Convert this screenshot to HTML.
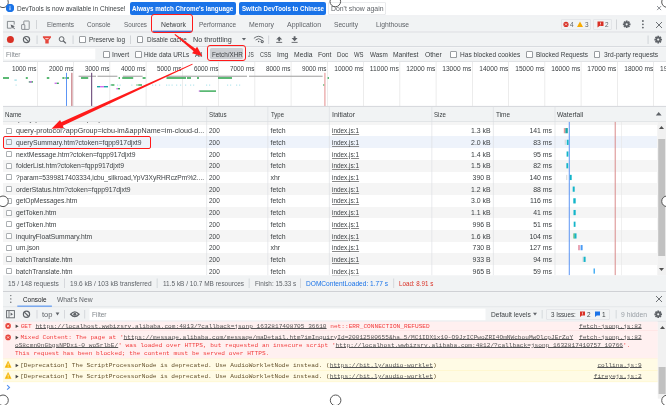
<!DOCTYPE html>
<html><head><meta charset="utf-8"><style>
html,body{margin:0;padding:0;}
body{will-change:transform;width:666px;height:405px;overflow:hidden;position:relative;background:#fff;font-family:"Liberation Sans",sans-serif;}
</style></head><body>
<svg style="position:absolute;left:0;top:0" width="666" height="405"><rect x="0" y="0" width="666" height="16" fill="#ffffff"/></svg>
<svg style="position:absolute;left:0;top:0" width="666" height="405"><rect x="3" y="15.5" width="663" height="1" fill="#e4e6e9"/></svg>
<svg style="position:absolute;left:0;top:0" width="20" height="16"><circle cx="10" cy="8.1" r="4.0" fill="#1a73e8"/><rect x="9.55" y="7.3" width="0.9" height="2.8" fill="#fff"/><rect x="9.55" y="5.8" width="0.9" height="0.9" fill="#fff"/></svg>
<div style="position:absolute;left:17.40px;top:3.60px;font-family:'Liberation Sans', sans-serif;font-size:6.9px;line-height:10px;color:#3c4043;font-weight:normal;white-space:nowrap;transform:scaleX(0.9419);transform-origin:left center;">DevTools is now available in Chinese!</div>
<div style="position:absolute;left:129.7px;top:2.2px;width:106.3px;height:12.6px;background:#1a73e8;border-radius:2px"></div>
<div style="position:absolute;left:132.20px;top:3.60px;font-family:'Liberation Sans', sans-serif;font-size:6.9px;line-height:10px;color:#ffffff;font-weight:bold;white-space:nowrap;transform:scaleX(0.9081);transform-origin:left center;">Always match Chrome&#x27;s language</div>
<div style="position:absolute;left:239px;top:2.2px;width:87px;height:12.6px;background:#1a73e8;border-radius:2px"></div>
<div style="position:absolute;left:241.60px;top:3.60px;font-family:'Liberation Sans', sans-serif;font-size:6.9px;line-height:10px;color:#ffffff;font-weight:bold;white-space:nowrap;transform:scaleX(0.8936);transform-origin:left center;">Switch DevTools to Chinese</div>
<div style="position:absolute;left:328px;top:2.2px;width:58px;height:12.6px;background:#ffffff;border-radius:2px;box-shadow:inset 0 0 0 0.6px #dadce0"></div>
<div style="position:absolute;left:330.80px;top:3.60px;font-family:'Liberation Sans', sans-serif;font-size:6.9px;line-height:10px;color:#5f6368;font-weight:normal;white-space:nowrap;transform:scaleX(0.9970);transform-origin:left center;">Don&#x27;t show again</div>
<svg style="position:absolute;left:655px;top:4px" width="8" height="8"><path d="M2.1 2.1 L6.1 6.1 M6.1 2.1 L2.1 6.1" stroke="#7a7f84" stroke-width="0.9"/></svg>
<svg style="position:absolute;left:0;top:0" width="666" height="405"><rect x="3" y="16.2" width="663" height="15.8" fill="#f1f3f4"/></svg>
<svg style="position:absolute;left:0;top:0" width="666" height="405"><rect x="3" y="31.7" width="663" height="1" fill="#cfd2d6"/></svg>
<svg style="position:absolute;left:5px;top:19px" width="12" height="12"><path d="M6 9.2 H2.4 V2.4 H9.2 V5.6" fill="none" stroke="#6f7479" stroke-width="0.8"/><path d="M5.6 5.6 L9.9 7.2 L8.2 7.9 L10 9.7 L9.4 10.3 L7.6 8.5 L6.9 10.1 Z" fill="#5f6368"/></svg>
<svg style="position:absolute;left:19px;top:18.5px" width="14" height="13"><rect x="4.8" y="2" width="5.4" height="8.4" rx="0.5" fill="none" stroke="#767b80" stroke-width="0.8"/><rect x="2.6" y="5.6" width="3.2" height="4.8" rx="0.4" fill="#f1f3f4" stroke="#767b80" stroke-width="0.8"/></svg>
<svg style="position:absolute;left:0;top:0" width="666" height="405"><rect x="36.3" y="20" width="0.7" height="9" fill="#c4c7cc"/></svg>
<div style="position:absolute;left:46.50px;top:20.10px;font-family:'Liberation Sans', sans-serif;font-size:6.9px;line-height:10px;color:#5f6368;font-weight:normal;white-space:nowrap;transform:scaleX(0.9396);transform-origin:left center;">Elements</div>
<div style="position:absolute;left:87.00px;top:20.10px;font-family:'Liberation Sans', sans-serif;font-size:6.9px;line-height:10px;color:#5f6368;font-weight:normal;white-space:nowrap;transform:scaleX(0.9290);transform-origin:left center;">Console</div>
<div style="position:absolute;left:124.00px;top:20.10px;font-family:'Liberation Sans', sans-serif;font-size:6.9px;line-height:10px;color:#5f6368;font-weight:normal;white-space:nowrap;transform:scaleX(0.9098);transform-origin:left center;">Sources</div>
<div style="position:absolute;left:160.60px;top:20.10px;font-family:'Liberation Sans', sans-serif;font-size:6.9px;line-height:10px;color:#3c4043;font-weight:normal;white-space:nowrap;transform:scaleX(0.9889);transform-origin:left center;">Network</div>
<div style="position:absolute;left:198.80px;top:20.10px;font-family:'Liberation Sans', sans-serif;font-size:6.9px;line-height:10px;color:#5f6368;font-weight:normal;white-space:nowrap;transform:scaleX(0.9429);transform-origin:left center;">Performance</div>
<div style="position:absolute;left:249.00px;top:20.10px;font-family:'Liberation Sans', sans-serif;font-size:6.9px;line-height:10px;color:#5f6368;font-weight:normal;white-space:nowrap;transform:scaleX(1.0044);transform-origin:left center;">Memory</div>
<div style="position:absolute;left:287.00px;top:20.10px;font-family:'Liberation Sans', sans-serif;font-size:6.9px;line-height:10px;color:#5f6368;font-weight:normal;white-space:nowrap;transform:scaleX(1.0083);transform-origin:left center;">Application</div>
<div style="position:absolute;left:334.00px;top:20.10px;font-family:'Liberation Sans', sans-serif;font-size:6.9px;line-height:10px;color:#5f6368;font-weight:normal;white-space:nowrap;transform:scaleX(0.9636);transform-origin:left center;">Security</div>
<div style="position:absolute;left:376.00px;top:20.10px;font-family:'Liberation Sans', sans-serif;font-size:6.9px;line-height:10px;color:#5f6368;font-weight:normal;white-space:nowrap;transform:scaleX(0.9787);transform-origin:left center;">Lighthouse</div>
<svg style="position:absolute;left:0;top:0" width="666" height="405"><rect x="153" y="30.7" width="39" height="1.2" fill="#3d5fc8"/></svg>
<div style="position:absolute;left:560.5px;top:19px;width:30.5px;height:10.7px;background:#f1f3f4;border-radius:2px;box-shadow:inset 0 0 0 0.6px #dadce0"></div>
<svg style="position:absolute;left:562px;top:20px" width="30" height="9"><circle cx="4" cy="4.4" r="2.6" fill="#d93025"/><path d="M3 3.4 L5 5.4 M5 3.4 L3 5.4" stroke="#fff" stroke-width="0.7"/><path d="M18 1.6 L21 7 L15 7 Z" fill="#f9ab00"/></svg>
<div style="position:absolute;left:570.20px;top:20.30px;font-family:'Liberation Sans', sans-serif;font-size:6.9px;line-height:10px;color:#5f6368;font-weight:normal;white-space:nowrap;transform:scaleX(0.9366);transform-origin:left center;">4</div>
<div style="position:absolute;left:584.50px;top:20.30px;font-family:'Liberation Sans', sans-serif;font-size:6.9px;line-height:10px;color:#5f6368;font-weight:normal;white-space:nowrap;transform:scaleX(0.9366);transform-origin:left center;">3</div>
<div style="position:absolute;left:593px;top:19px;width:19.4px;height:10.7px;background:#f1f3f4;border-radius:2px;box-shadow:inset 0 0 0 0.6px #dadce0"></div>
<svg style="position:absolute;left:596px;top:20px" width="10" height="9"><path d="M1.5 1.6 H7.5 V6 H3.5 L1.5 7.6 Z" fill="#d93025"/><rect x="4.2" y="2.5" width="0.7" height="1.8" fill="#fff"/><rect x="4.2" y="4.7" width="0.7" height="0.6" fill="#fff"/></svg>
<div style="position:absolute;left:604.50px;top:20.30px;font-family:'Liberation Sans', sans-serif;font-size:6.9px;line-height:10px;color:#5f6368;font-weight:normal;white-space:nowrap;transform:scaleX(0.9366);transform-origin:left center;">2</div>
<svg style="position:absolute;left:0;top:0" width="666" height="405"><rect x="616.2" y="19.5" width="0.7" height="10" fill="#c4c7cc"/></svg>
<svg style="position:absolute;left:0;top:0" width="666" height="405"><path d="M629.27 23.33 L630.51 23.46 L630.51 25.14 L629.27 25.27 L629.20 25.43 L629.98 26.40 L628.80 27.58 L627.83 26.80 L627.67 26.87 L627.54 28.11 L625.86 28.11 L625.73 26.87 L625.57 26.80 L624.60 27.58 L623.42 26.40 L624.20 25.43 L624.13 25.27 L622.89 25.14 L622.89 23.46 L624.13 23.33 L624.20 23.17 L623.42 22.20 L624.60 21.02 L625.57 21.80 L625.73 21.73 L625.86 20.49 L627.54 20.49 L627.67 21.73 L627.83 21.80 L628.80 21.02 L629.98 22.20 L629.20 23.17 Z" fill="#5f6368"/><circle cx="626.7" cy="24.3" r="1.1" fill="#f1f3f4"/></svg>
<svg style="position:absolute;left:640px;top:19px" width="6" height="11"><circle cx="2.9" cy="2" r="0.9" fill="#5f6368"/><circle cx="2.9" cy="5.3" r="0.9" fill="#5f6368"/><circle cx="2.9" cy="8.6" r="0.9" fill="#5f6368"/></svg>
<svg style="position:absolute;left:654px;top:19.5px" width="10" height="10"><path d="M2 2 L8 8 M8 2 L2 8" stroke="#5f6368" stroke-width="0.9"/></svg>
<svg style="position:absolute;left:0;top:0" width="666" height="405"><rect x="3" y="32.5" width="663" height="14.5" fill="#f1f3f4"/></svg>
<svg style="position:absolute;left:0;top:0" width="666" height="405"><rect x="3" y="46.0" width="663" height="1" fill="#d8dbdf"/></svg>
<svg style="position:absolute;left:0;top:0" width="666" height="50"><circle cx="10.4" cy="39.6" r="3.5" fill="#d93025"/><circle cx="26.5" cy="39.6" r="3.1" fill="none" stroke="#5f6368" stroke-width="1.2"/><path d="M24.3 37.4 L28.7 41.8" stroke="#5f6368" stroke-width="1.2"/><path d="M42.9 36.3 H51 V37.6 L48.7 40.3 V43.6 H45.3 V40.3 L42.9 37.6 Z" fill="#e5473d"/><path d="M44.9 38.0 H49 L48 39.3 H45.9 Z" fill="#f7c4c0"/><circle cx="61.6" cy="39.1" r="2.4" fill="none" stroke="#5f6368" stroke-width="1.0"/><path d="M63.2 40.7 L65.9 43.4" stroke="#5f6368" stroke-width="1.3"/></svg>
<svg style="position:absolute;left:0;top:0" width="666" height="405"><rect x="36.7" y="35.5" width="0.7" height="8.5" fill="#c4c7cc"/></svg>
<svg style="position:absolute;left:0;top:0" width="666" height="405"><rect x="72.7" y="35.5" width="0.7" height="8.5" fill="#c4c7cc"/></svg>
<div style="position:absolute;left:78.9px;top:36.3px;width:6.8px;height:6.8px;background:#fff;border-radius:1.5px;box-shadow:inset 0 0 0 0.8px #7d8287;box-sizing:border-box"></div>
<div style="position:absolute;left:89.00px;top:35.00px;font-family:'Liberation Sans', sans-serif;font-size:6.9px;line-height:10px;color:#3c4043;font-weight:normal;white-space:nowrap;transform:scaleX(0.9305);transform-origin:left center;">Preserve log</div>
<svg style="position:absolute;left:0;top:0" width="666" height="405"><rect x="130.3" y="35.5" width="0.7" height="8.5" fill="#c4c7cc"/></svg>
<div style="position:absolute;left:136.6px;top:36.3px;width:6.8px;height:6.8px;background:#fff;border-radius:1.5px;box-shadow:inset 0 0 0 0.8px #7d8287;box-sizing:border-box"></div>
<div style="position:absolute;left:146.80px;top:35.00px;font-family:'Liberation Sans', sans-serif;font-size:6.9px;line-height:10px;color:#3c4043;font-weight:normal;white-space:nowrap;transform:scaleX(0.9192);transform-origin:left center;">Disable cache</div>
<div style="position:absolute;left:193.00px;top:35.00px;font-family:'Liberation Sans', sans-serif;font-size:6.9px;line-height:10px;color:#3c4043;font-weight:normal;white-space:nowrap;transform:scaleX(1.0442);transform-origin:left center;">No throttling</div>
<svg style="position:absolute;left:241px;top:37px" width="6" height="5"><path d="M0.9 0.9 H5 L2.95 3.4 Z" fill="#5f6368"/></svg>
<svg style="position:absolute;left:0;top:0" width="666" height="50"><path d="M253.9 38.3 Q258.6 34.3 263.3 38.3" fill="none" stroke="#5f6368" stroke-width="0.9"/><path d="M255.6 40 Q258.6 37.4 261.6 40" fill="none" stroke="#5f6368" stroke-width="0.9"/><circle cx="258.6" cy="41.6" r="0.75" fill="#5f6368"/><circle cx="262.2" cy="41.6" r="1.6" fill="#5f6368"/><circle cx="262.2" cy="41.6" r="0.55" fill="#f1f3f4"/><path d="M279.2 36.4 L282.2 39.6 H280.1 V41.3 H278.3 V39.6 H276.2 Z" fill="#5f6368"/><rect x="276.2" y="41.9" width="6" height="0.9" fill="#5f6368"/><path d="M294.6 41.2 L291.6 38 H293.7 V36.3 H295.5 V38 H297.6 Z" fill="#5f6368"/><rect x="291.6" y="41.9" width="6" height="0.9" fill="#5f6368"/></svg>
<svg style="position:absolute;left:0;top:0" width="666" height="405"><rect x="268.4" y="35.5" width="0.7" height="8.5" fill="#c4c7cc"/></svg>
<svg style="position:absolute;left:0;top:0" width="666" height="405"><rect x="647.7" y="35.5" width="0.7" height="8.5" fill="#c4c7cc"/></svg>
<svg style="position:absolute;left:0;top:0" width="666" height="405"><path d="M660.77 38.63 L662.01 38.76 L662.01 40.44 L660.77 40.57 L660.70 40.73 L661.48 41.70 L660.30 42.88 L659.33 42.10 L659.17 42.17 L659.04 43.41 L657.36 43.41 L657.23 42.17 L657.07 42.10 L656.10 42.88 L654.92 41.70 L655.70 40.73 L655.63 40.57 L654.39 40.44 L654.39 38.76 L655.63 38.63 L655.70 38.47 L654.92 37.50 L656.10 36.32 L657.07 37.10 L657.23 37.03 L657.36 35.79 L659.04 35.79 L659.17 37.03 L659.33 37.10 L660.30 36.32 L661.48 37.50 L660.70 38.47 Z" fill="#5f6368"/><circle cx="658.2" cy="39.6" r="1.1" fill="#f1f3f4"/></svg>
<svg style="position:absolute;left:0;top:0" width="666" height="405"><rect x="3" y="47.3" width="663" height="14.4" fill="#f1f3f4"/></svg>
<svg style="position:absolute;left:0;top:0" width="666" height="405"><rect x="3" y="61.1" width="663" height="1" fill="#dfe1e5"/></svg>
<svg style="position:absolute;left:0;top:0" width="666" height="405"><rect x="3.8" y="48.6" width="91.5" height="10.9" fill="#ffffff"/></svg>
<div style="position:absolute;left:6.00px;top:50.30px;font-family:'Liberation Sans', sans-serif;font-size:6.9px;line-height:10px;color:#80868b;font-weight:normal;white-space:nowrap;transform:scaleX(0.9469);transform-origin:left center;">Filter</div>
<div style="position:absolute;left:102.8px;top:51.1px;width:6.8px;height:6.8px;background:#fff;border-radius:1.5px;box-shadow:inset 0 0 0 0.8px #7d8287;box-sizing:border-box"></div>
<div style="position:absolute;left:112.40px;top:49.90px;font-family:'Liberation Sans', sans-serif;font-size:6.9px;line-height:10px;color:#3c4043;font-weight:normal;white-space:nowrap;transform:scaleX(0.9922);transform-origin:left center;">Invert</div>
<div style="position:absolute;left:135.3px;top:51.1px;width:6.8px;height:6.8px;background:#fff;border-radius:1.5px;box-shadow:inset 0 0 0 0.8px #7d8287;box-sizing:border-box"></div>
<div style="position:absolute;left:144.30px;top:49.90px;font-family:'Liberation Sans', sans-serif;font-size:6.9px;line-height:10px;color:#3c4043;font-weight:normal;white-space:nowrap;transform:scaleX(0.9290);transform-origin:left center;">Hide data URLs</div>
<div style="position:absolute;left:195.40px;top:49.90px;font-family:'Liberation Sans', sans-serif;font-size:6.9px;line-height:10px;color:#3c4043;font-weight:normal;white-space:nowrap;transform:scaleX(0.9385);transform-origin:left center;">All</div>
<div style="position:absolute;left:209.8px;top:47.9px;width:33.4px;height:11.3px;background:#cdd0d4;border-radius:1.5px"></div>
<div style="position:absolute;left:211.60px;top:49.90px;font-family:'Liberation Sans', sans-serif;font-size:6.9px;line-height:10px;color:#3c4043;font-weight:normal;white-space:nowrap;transform:scaleX(0.9109);transform-origin:left center;">Fetch/XHR</div>
<div style="position:absolute;left:248.30px;top:49.90px;font-family:'Liberation Sans', sans-serif;font-size:6.9px;line-height:10px;color:#3c4043;font-weight:normal;white-space:nowrap;transform:scaleX(0.7083);transform-origin:left center;">JS</div>
<div style="position:absolute;left:259.80px;top:49.90px;font-family:'Liberation Sans', sans-serif;font-size:6.9px;line-height:10px;color:#3c4043;font-weight:normal;white-space:nowrap;transform:scaleX(0.7903);transform-origin:left center;">CSS</div>
<div style="position:absolute;left:276.70px;top:49.90px;font-family:'Liberation Sans', sans-serif;font-size:6.9px;line-height:10px;color:#3c4043;font-weight:normal;white-space:nowrap;transform:scaleX(0.9826);transform-origin:left center;">Img</div>
<div style="position:absolute;left:293.70px;top:49.90px;font-family:'Liberation Sans', sans-serif;font-size:6.9px;line-height:10px;color:#3c4043;font-weight:normal;white-space:nowrap;transform:scaleX(0.9850);transform-origin:left center;">Media</div>
<div style="position:absolute;left:317.70px;top:49.90px;font-family:'Liberation Sans', sans-serif;font-size:6.9px;line-height:10px;color:#3c4043;font-weight:normal;white-space:nowrap;transform:scaleX(0.9785);transform-origin:left center;">Font</div>
<div style="position:absolute;left:337.00px;top:49.90px;font-family:'Liberation Sans', sans-serif;font-size:6.9px;line-height:10px;color:#3c4043;font-weight:normal;white-space:nowrap;transform:scaleX(0.8968);transform-origin:left center;">Doc</div>
<div style="position:absolute;left:354.30px;top:49.90px;font-family:'Liberation Sans', sans-serif;font-size:6.9px;line-height:10px;color:#3c4043;font-weight:normal;white-space:nowrap;transform:scaleX(0.8641);transform-origin:left center;">WS</div>
<div style="position:absolute;left:369.70px;top:49.90px;font-family:'Liberation Sans', sans-serif;font-size:6.9px;line-height:10px;color:#3c4043;font-weight:normal;white-space:nowrap;transform:scaleX(0.9239);transform-origin:left center;">Wasm</div>
<div style="position:absolute;left:393.30px;top:49.90px;font-family:'Liberation Sans', sans-serif;font-size:6.9px;line-height:10px;color:#3c4043;font-weight:normal;white-space:nowrap;transform:scaleX(0.9790);transform-origin:left center;">Manifest</div>
<div style="position:absolute;left:424.60px;top:49.90px;font-family:'Liberation Sans', sans-serif;font-size:6.9px;line-height:10px;color:#3c4043;font-weight:normal;white-space:nowrap;transform:scaleX(0.9748);transform-origin:left center;">Other</div>
<div style="position:absolute;left:450.1px;top:51.1px;width:6.8px;height:6.8px;background:#fff;border-radius:1.5px;box-shadow:inset 0 0 0 0.8px #7d8287;box-sizing:border-box"></div>
<div style="position:absolute;left:460.00px;top:49.90px;font-family:'Liberation Sans', sans-serif;font-size:6.9px;line-height:10px;color:#3c4043;font-weight:normal;white-space:nowrap;transform:scaleX(0.9525);transform-origin:left center;">Has blocked cookies</div>
<div style="position:absolute;left:526.1px;top:51.1px;width:6.8px;height:6.8px;background:#fff;border-radius:1.5px;box-shadow:inset 0 0 0 0.8px #7d8287;box-sizing:border-box"></div>
<div style="position:absolute;left:536.00px;top:49.90px;font-family:'Liberation Sans', sans-serif;font-size:6.9px;line-height:10px;color:#3c4043;font-weight:normal;white-space:nowrap;transform:scaleX(0.9361);transform-origin:left center;">Blocked Requests</div>
<div style="position:absolute;left:593.6px;top:51.1px;width:6.8px;height:6.8px;background:#fff;border-radius:1.5px;box-shadow:inset 0 0 0 0.8px #7d8287;box-sizing:border-box"></div>
<div style="position:absolute;left:603.80px;top:49.90px;font-family:'Liberation Sans', sans-serif;font-size:6.9px;line-height:10px;color:#3c4043;font-weight:normal;white-space:nowrap;transform:scaleX(0.9692);transform-origin:left center;">3rd-party requests</div>
<svg style="position:absolute;left:0;top:0" width="666" height="405"><rect x="3" y="62" width="663" height="44.5" fill="#ffffff"/></svg>
<svg style="position:absolute;left:0;top:0" width="666" height="405"><rect x="37.00" y="62" width="0.7" height="44.5" fill="#e4e4e4"/><rect x="73.25" y="62" width="0.7" height="44.5" fill="#e4e4e4"/><rect x="109.50" y="62" width="0.7" height="44.5" fill="#e4e4e4"/><rect x="145.75" y="62" width="0.7" height="44.5" fill="#e4e4e4"/><rect x="182.00" y="62" width="0.7" height="44.5" fill="#e4e4e4"/><rect x="218.25" y="62" width="0.7" height="44.5" fill="#e4e4e4"/><rect x="254.50" y="62" width="0.7" height="44.5" fill="#e4e4e4"/><rect x="290.75" y="62" width="0.7" height="44.5" fill="#e4e4e4"/><rect x="327.00" y="62" width="0.7" height="44.5" fill="#e4e4e4"/><rect x="363.25" y="62" width="0.7" height="44.5" fill="#e4e4e4"/><rect x="399.50" y="62" width="0.7" height="44.5" fill="#e4e4e4"/><rect x="435.75" y="62" width="0.7" height="44.5" fill="#e4e4e4"/><rect x="472.00" y="62" width="0.7" height="44.5" fill="#e4e4e4"/><rect x="508.25" y="62" width="0.7" height="44.5" fill="#e4e4e4"/><rect x="544.50" y="62" width="0.7" height="44.5" fill="#e4e4e4"/><rect x="580.75" y="62" width="0.7" height="44.5" fill="#e4e4e4"/><rect x="617.00" y="62" width="0.7" height="44.5" fill="#e4e4e4"/><rect x="653.25" y="62" width="0.7" height="44.5" fill="#e4e4e4"/><rect x="78.6" y="75.7" width="17.40" height="1.1" fill="#a6a6a6"/><rect x="97.5" y="75.7" width="19.90" height="1.1" fill="#a6a6a6"/><rect x="122.8" y="75.7" width="19.80" height="1.1" fill="#a6a6a6"/><rect x="166.5" y="75.7" width="80.50" height="1.1" fill="#a6a6a6"/><rect x="249" y="75.7" width="73.60" height="1.1" fill="#a6a6a6"/><rect x="3" y="77.2" width="6.00" height="1.6" fill="#34a853"/><rect x="25.8" y="77.2" width="2.00" height="1.6" fill="#34a853"/><rect x="46.8" y="77.2" width="2.50" height="1.6" fill="#34a853"/><rect x="62.4" y="77.2" width="2.10" height="1.6" fill="#34a853"/><rect x="65.4" y="77.2" width="3.60" height="1.6" fill="#34a853"/><rect x="81" y="77.2" width="7.20" height="1.6" fill="#34a853"/><rect x="118.6" y="77.2" width="1.40" height="1.6" fill="#34a853"/><rect x="122.2" y="77.2" width="11.00" height="1.6" fill="#34a853"/><rect x="142.6" y="77.2" width="3.00" height="1.6" fill="#34a853"/><rect x="166.5" y="77.2" width="19.50" height="1.6" fill="#34a853"/><rect x="187" y="77.2" width="4.00" height="1.6" fill="#34a853"/><rect x="197" y="77.2" width="2.00" height="1.6" fill="#34a853"/><rect x="218" y="77.2" width="14.00" height="1.6" fill="#34a853"/><rect x="327.6" y="77.2" width="1.40" height="1.6" fill="#34a853"/><rect x="14.4" y="79.4" width="2.40" height="1.4" fill="#a8e2ea"/><rect x="110.8" y="84.3" width="3.60" height="1.4" fill="#34a853"/><rect x="136.5" y="84.3" width="1.00" height="1.4" fill="#34a853"/><rect x="138.2" y="84.3" width="3.80" height="1.4" fill="#34a853"/><rect x="199.5" y="90.4" width="16.50" height="1.4" fill="#34a853"/><rect x="323.2" y="84.3" width="1.20" height="1.4" fill="#34a853"/><rect x="28.8" y="81.2" width="4.20" height="1.4" fill="#34a853"/><rect x="29.5" y="81.2" width="2.30" height="1.4" fill="#d36ff0"/><rect x="54.6" y="82.6" width="2.20" height="1.4" fill="#d36ff0"/><rect x="56.8" y="82.6" width="2.00" height="1.4" fill="#34a853"/><rect x="97" y="86" width="3.00" height="1.4" fill="#1aa5a5"/><rect x="100" y="86" width="4.00" height="1.4" fill="#d36ff0"/><rect x="104" y="86" width="4.00" height="1.4" fill="#1aa5a5"/><rect x="116.4" y="88" width="1.60" height="1.4" fill="#d36ff0"/><rect x="118" y="88" width="2.00" height="1.4" fill="#34a853"/><rect x="15.5" y="84.6" width="1.20" height="1" fill="#a8e2ea"/><rect x="110.5" y="84.6" width="1.20" height="1" fill="#a8e2ea"/><rect x="117" y="84.6" width="1.20" height="1" fill="#a8e2ea"/><rect x="119.6" y="84.6" width="1.20" height="1" fill="#a8e2ea"/><rect x="131.2" y="84.6" width="1.20" height="1" fill="#a8e2ea"/><rect x="152" y="84.6" width="1.20" height="1" fill="#a8e2ea"/><rect x="155" y="84.6" width="1.20" height="1" fill="#a8e2ea"/><rect x="159" y="84.6" width="1.20" height="1" fill="#a8e2ea"/><rect x="166" y="84.6" width="1.20" height="1" fill="#a8e2ea"/><rect x="168.5" y="84.6" width="1.20" height="1" fill="#a8e2ea"/><rect x="171.5" y="84.6" width="1.20" height="1" fill="#a8e2ea"/><rect x="176" y="84.6" width="1.20" height="1" fill="#a8e2ea"/><rect x="180" y="84.6" width="1.20" height="1" fill="#a8e2ea"/><rect x="185" y="84.6" width="1.20" height="1" fill="#a8e2ea"/><rect x="190" y="84.6" width="1.20" height="1" fill="#a8e2ea"/><rect x="193" y="84.6" width="1.20" height="1" fill="#a8e2ea"/><rect x="206" y="84.6" width="1.20" height="1" fill="#a8e2ea"/><rect x="209" y="84.6" width="1.20" height="1" fill="#a8e2ea"/><rect x="227" y="84.6" width="1.20" height="1" fill="#a8e2ea"/><rect x="230" y="84.6" width="1.20" height="1" fill="#a8e2ea"/><rect x="236" y="84.6" width="1.20" height="1" fill="#a8e2ea"/><rect x="239" y="84.6" width="1.20" height="1" fill="#a8e2ea"/><rect x="198.8" y="90.4" width="1.00" height="1.4" fill="#d36ff0"/><rect x="66.1" y="72.8" width="0.9" height="33.7" fill="#4a8af4"/><rect x="71.2" y="72.8" width="1.3" height="33.7" fill="#c77f86"/><rect x="91.1" y="72.8" width="1.1" height="33.7" fill="#6b4a7a"/><rect x="324.3" y="72.8" width="1.2" height="33.7" fill="#e8a0a0"/></svg>
<div style="position:absolute;right:629.30px;top:64.00px;font-family:'Liberation Sans', sans-serif;font-size:6.9px;line-height:10px;color:#3c4043;font-weight:normal;white-space:nowrap;transform:scaleX(0.9267);transform-origin:right center;">1000 ms</div>
<div style="position:absolute;right:593.05px;top:64.00px;font-family:'Liberation Sans', sans-serif;font-size:6.9px;line-height:10px;color:#3c4043;font-weight:normal;white-space:nowrap;transform:scaleX(0.9267);transform-origin:right center;">2000 ms</div>
<div style="position:absolute;right:556.80px;top:64.00px;font-family:'Liberation Sans', sans-serif;font-size:6.9px;line-height:10px;color:#3c4043;font-weight:normal;white-space:nowrap;transform:scaleX(0.9267);transform-origin:right center;">3000 ms</div>
<div style="position:absolute;right:520.55px;top:64.00px;font-family:'Liberation Sans', sans-serif;font-size:6.9px;line-height:10px;color:#3c4043;font-weight:normal;white-space:nowrap;transform:scaleX(0.9267);transform-origin:right center;">4000 ms</div>
<div style="position:absolute;right:484.30px;top:64.00px;font-family:'Liberation Sans', sans-serif;font-size:6.9px;line-height:10px;color:#3c4043;font-weight:normal;white-space:nowrap;transform:scaleX(0.9267);transform-origin:right center;">5000 ms</div>
<div style="position:absolute;right:448.05px;top:64.00px;font-family:'Liberation Sans', sans-serif;font-size:6.9px;line-height:10px;color:#3c4043;font-weight:normal;white-space:nowrap;transform:scaleX(0.9267);transform-origin:right center;">6000 ms</div>
<div style="position:absolute;right:411.80px;top:64.00px;font-family:'Liberation Sans', sans-serif;font-size:6.9px;line-height:10px;color:#3c4043;font-weight:normal;white-space:nowrap;transform:scaleX(0.9267);transform-origin:right center;">7000 ms</div>
<div style="position:absolute;right:375.55px;top:64.00px;font-family:'Liberation Sans', sans-serif;font-size:6.9px;line-height:10px;color:#3c4043;font-weight:normal;white-space:nowrap;transform:scaleX(0.9267);transform-origin:right center;">8000 ms</div>
<div style="position:absolute;right:339.30px;top:64.00px;font-family:'Liberation Sans', sans-serif;font-size:6.9px;line-height:10px;color:#3c4043;font-weight:normal;white-space:nowrap;transform:scaleX(0.9267);transform-origin:right center;">9000 ms</div>
<div style="position:absolute;right:303.05px;top:64.00px;font-family:'Liberation Sans', sans-serif;font-size:6.9px;line-height:10px;color:#3c4043;font-weight:normal;white-space:nowrap;transform:scaleX(0.9582);transform-origin:right center;">10000 ms</div>
<div style="position:absolute;right:266.80px;top:64.00px;font-family:'Liberation Sans', sans-serif;font-size:6.9px;line-height:10px;color:#3c4043;font-weight:normal;white-space:nowrap;transform:scaleX(0.9748);transform-origin:right center;">11000 ms</div>
<div style="position:absolute;right:230.55px;top:64.00px;font-family:'Liberation Sans', sans-serif;font-size:6.9px;line-height:10px;color:#3c4043;font-weight:normal;white-space:nowrap;transform:scaleX(0.9582);transform-origin:right center;">12000 ms</div>
<div style="position:absolute;right:194.30px;top:64.00px;font-family:'Liberation Sans', sans-serif;font-size:6.9px;line-height:10px;color:#3c4043;font-weight:normal;white-space:nowrap;transform:scaleX(0.9582);transform-origin:right center;">13000 ms</div>
<div style="position:absolute;right:158.05px;top:64.00px;font-family:'Liberation Sans', sans-serif;font-size:6.9px;line-height:10px;color:#3c4043;font-weight:normal;white-space:nowrap;transform:scaleX(0.9582);transform-origin:right center;">14000 ms</div>
<div style="position:absolute;right:121.80px;top:64.00px;font-family:'Liberation Sans', sans-serif;font-size:6.9px;line-height:10px;color:#3c4043;font-weight:normal;white-space:nowrap;transform:scaleX(0.9582);transform-origin:right center;">15000 ms</div>
<div style="position:absolute;right:85.55px;top:64.00px;font-family:'Liberation Sans', sans-serif;font-size:6.9px;line-height:10px;color:#3c4043;font-weight:normal;white-space:nowrap;transform:scaleX(0.9582);transform-origin:right center;">16000 ms</div>
<div style="position:absolute;right:49.30px;top:64.00px;font-family:'Liberation Sans', sans-serif;font-size:6.9px;line-height:10px;color:#3c4043;font-weight:normal;white-space:nowrap;transform:scaleX(0.9582);transform-origin:right center;">17000 ms</div>
<div style="position:absolute;right:13.05px;top:64.00px;font-family:'Liberation Sans', sans-serif;font-size:6.9px;line-height:10px;color:#3c4043;font-weight:normal;white-space:nowrap;transform:scaleX(0.9582);transform-origin:right center;">18000 ms</div>
<div style="position:absolute;left:659.80px;top:64.00px;font-family:'Liberation Sans', sans-serif;font-size:6.9px;line-height:10px;color:#3c4043;font-weight:normal;white-space:nowrap;transform:scaleX(0.9582);transform-origin:left center;">19000 ms</div>
<svg style="position:absolute;left:0;top:0" width="666" height="405"><rect x="3" y="106.3" width="663" height="15.3" fill="#f1f3f4"/></svg>
<svg style="position:absolute;left:0;top:0" width="666" height="405"><rect x="3" y="105.9" width="663" height="1" fill="#d5d8dc"/></svg>
<svg style="position:absolute;left:0;top:0" width="666" height="405"><rect x="3" y="121.3" width="663" height="0.6" fill="#d5d8dc"/></svg>
<div style="position:absolute;left:3px;top:121.9px;width:654.3px;height:153.4px;overflow:hidden;background:#fff">
<div style="position:absolute;left:0;top:-8.80px;width:654.3px;height:11.7px;background:#f5f5f5"></div>
<div style="position:absolute;left:0;top:2.90px;width:654.3px;height:11.7px;background:#ffffff"></div>
<div style="position:absolute;left:0;top:14.60px;width:654.3px;height:11.7px;background:#eef3fb"></div>
<div style="position:absolute;left:0;top:26.30px;width:654.3px;height:11.7px;background:#ffffff"></div>
<div style="position:absolute;left:0;top:38.00px;width:654.3px;height:11.7px;background:#f5f5f5"></div>
<div style="position:absolute;left:0;top:49.70px;width:654.3px;height:11.7px;background:#ffffff"></div>
<div style="position:absolute;left:0;top:61.40px;width:654.3px;height:11.7px;background:#f5f5f5"></div>
<div style="position:absolute;left:0;top:73.10px;width:654.3px;height:11.7px;background:#ffffff"></div>
<div style="position:absolute;left:0;top:84.80px;width:654.3px;height:11.7px;background:#f5f5f5"></div>
<div style="position:absolute;left:0;top:96.50px;width:654.3px;height:11.7px;background:#ffffff"></div>
<div style="position:absolute;left:0;top:108.20px;width:654.3px;height:11.7px;background:#f5f5f5"></div>
<div style="position:absolute;left:0;top:119.90px;width:654.3px;height:11.7px;background:#ffffff"></div>
<div style="position:absolute;left:0;top:131.60px;width:654.3px;height:11.7px;background:#f5f5f5"></div>
<div style="position:absolute;left:0;top:143.30px;width:654.3px;height:11.7px;background:#ffffff"></div>
</div>
<svg style="position:absolute;left:0;top:0" width="666" height="405"><rect x="206.5" y="106.8" width="0.6" height="168.5" fill="#dadce0"/></svg>
<svg style="position:absolute;left:0;top:0" width="666" height="405"><rect x="267.6" y="106.8" width="0.6" height="168.5" fill="#dadce0"/></svg>
<svg style="position:absolute;left:0;top:0" width="666" height="405"><rect x="328.9" y="106.8" width="0.6" height="168.5" fill="#dadce0"/></svg>
<svg style="position:absolute;left:0;top:0" width="666" height="405"><rect x="431.6" y="106.8" width="0.6" height="168.5" fill="#dadce0"/></svg>
<svg style="position:absolute;left:0;top:0" width="666" height="405"><rect x="492.9" y="106.8" width="0.6" height="168.5" fill="#dadce0"/></svg>
<svg style="position:absolute;left:0;top:0" width="666" height="405"><rect x="554.7" y="106.8" width="0.6" height="168.5" fill="#dadce0"/></svg>
<svg style="position:absolute;left:0;top:0" width="666" height="405"><rect x="568.8" y="121.9" width="0.9" height="153.4" fill="#4a8af4"/></svg>
<svg style="position:absolute;left:0;top:0" width="666" height="405"><rect x="614.7" y="121.9" width="1.0" height="153.4" fill="#d98b8b"/></svg>
<svg style="position:absolute;left:0;top:0" width="666" height="405"><rect x="621.2" y="121.9" width="0.6" height="153.4" fill="#e6e6e6"/></svg>
<div style="position:absolute;left:5.00px;top:110.30px;font-family:'Liberation Sans', sans-serif;font-size:6.9px;line-height:10px;color:#3c4043;font-weight:normal;white-space:nowrap;transform:scaleX(0.8972);transform-origin:left center;">Name</div>
<div style="position:absolute;left:209.30px;top:110.30px;font-family:'Liberation Sans', sans-serif;font-size:6.9px;line-height:10px;color:#3c4043;font-weight:normal;white-space:nowrap;transform:scaleX(0.9055);transform-origin:left center;">Status</div>
<div style="position:absolute;left:270.60px;top:110.30px;font-family:'Liberation Sans', sans-serif;font-size:6.9px;line-height:10px;color:#3c4043;font-weight:normal;white-space:nowrap;transform:scaleX(0.8694);transform-origin:left center;">Type</div>
<div style="position:absolute;left:331.50px;top:110.30px;font-family:'Liberation Sans', sans-serif;font-size:6.9px;line-height:10px;color:#3c4043;font-weight:normal;white-space:nowrap;transform:scaleX(1.0173);transform-origin:left center;">Initiator</div>
<div style="position:absolute;left:434.00px;top:110.30px;font-family:'Liberation Sans', sans-serif;font-size:6.9px;line-height:10px;color:#3c4043;font-weight:normal;white-space:nowrap;transform:scaleX(0.8876);transform-origin:left center;">Size</div>
<div style="position:absolute;left:495.70px;top:110.30px;font-family:'Liberation Sans', sans-serif;font-size:6.9px;line-height:10px;color:#3c4043;font-weight:normal;white-space:nowrap;transform:scaleX(0.9295);transform-origin:left center;">Time</div>
<div style="position:absolute;left:557.40px;top:110.30px;font-family:'Liberation Sans', sans-serif;font-size:6.9px;line-height:10px;color:#3c4043;font-weight:normal;white-space:nowrap;transform:scaleX(0.9726);transform-origin:left center;">Waterfall</div>
<svg style="position:absolute;left:655px;top:111px" width="8" height="6"><path d="M0.8 4.6 H6.6 L3.7 1 Z" fill="#5f6368"/></svg>
<div style="position:absolute;left:3px;top:121.9px;width:200px;height:2.6px;overflow:hidden">
<div style="position:absolute;left:12.80px;top:-7.70px;font-family:'Liberation Sans', sans-serif;font-size:6.9px;line-height:10px;color:#3c4043;font-weight:normal;white-space:nowrap;">query-protocol?ppGroup=iq</div>
</div>
<div style="position:absolute;left:6.2px;top:127.65px;width:6.0px;height:6.0px;background:#ffffff;border-radius:1.5px;box-shadow:inset 0 0 0 0.7px #8f9498;box-sizing:border-box"></div>
<div style="position:absolute;left:15.80px;top:126.25px;font-family:'Liberation Sans', sans-serif;font-size:6.9px;line-height:10px;color:#3c4043;font-weight:normal;white-space:nowrap;transform:scaleX(1.0388);transform-origin:left center;">query-protocol?appGroup=icbu-im&amp;appName=im-cloud-d...</div>
<div style="position:absolute;left:209.30px;top:126.25px;font-family:'Liberation Sans', sans-serif;font-size:6.9px;line-height:10px;color:#3c4043;font-weight:normal;white-space:nowrap;transform:scaleX(0.9304);transform-origin:left center;">200</div>
<div style="position:absolute;left:270.60px;top:126.25px;font-family:'Liberation Sans', sans-serif;font-size:6.9px;line-height:10px;color:#3c4043;font-weight:normal;white-space:nowrap;">fetch</div>
<div style="position:absolute;left:331.50px;top:126.25px;font-family:'Liberation Sans', sans-serif;font-size:6.9px;line-height:10px;color:#3c4043;font-weight:normal;white-space:nowrap;transform:scaleX(0.9305);transform-origin:left center;text-decoration:underline;text-decoration-thickness:0.5px;text-underline-offset:0.6px;text-decoration-color:#8a8a8a;">index.js:1</div>
<div style="position:absolute;right:175.40px;top:126.25px;font-family:'Liberation Sans', sans-serif;font-size:6.9px;line-height:10px;color:#3c4043;font-weight:normal;white-space:nowrap;">1.3 kB</div>
<div style="position:absolute;right:114.00px;top:126.25px;font-family:'Liberation Sans', sans-serif;font-size:6.9px;line-height:10px;color:#3c4043;font-weight:normal;white-space:nowrap;">141 ms</div>
<svg style="position:absolute;left:0;top:0" width="666" height="405"><rect x="563.8" y="128.05" width="1.7000000000000455" height="5.2" fill="#e69a9a"/></svg>
<svg style="position:absolute;left:0;top:0" width="666" height="405"><rect x="565.4" y="128.05" width="2.3999999999999773" height="5.2" fill="#1aa5a5"/></svg>
<div style="position:absolute;left:6.2px;top:139.35px;width:6.0px;height:6.0px;background:#eef3fb;border-radius:1.5px;box-shadow:inset 0 0 0 0.7px #8f9498;box-sizing:border-box"></div>
<div style="position:absolute;left:15.80px;top:137.95px;font-family:'Liberation Sans', sans-serif;font-size:6.9px;line-height:10px;color:#3c4043;font-weight:normal;white-space:nowrap;transform:scaleX(0.9864);transform-origin:left center;">querySummary.htm?ctoken=fqpp917djxt9</div>
<div style="position:absolute;left:209.30px;top:137.95px;font-family:'Liberation Sans', sans-serif;font-size:6.9px;line-height:10px;color:#3c4043;font-weight:normal;white-space:nowrap;transform:scaleX(0.9304);transform-origin:left center;">200</div>
<div style="position:absolute;left:270.60px;top:137.95px;font-family:'Liberation Sans', sans-serif;font-size:6.9px;line-height:10px;color:#3c4043;font-weight:normal;white-space:nowrap;">fetch</div>
<div style="position:absolute;left:331.50px;top:137.95px;font-family:'Liberation Sans', sans-serif;font-size:6.9px;line-height:10px;color:#3c4043;font-weight:normal;white-space:nowrap;transform:scaleX(0.9305);transform-origin:left center;text-decoration:underline;text-decoration-thickness:0.5px;text-underline-offset:0.6px;text-decoration-color:#8a8a8a;">index.js:1</div>
<div style="position:absolute;right:175.40px;top:137.95px;font-family:'Liberation Sans', sans-serif;font-size:6.9px;line-height:10px;color:#3c4043;font-weight:normal;white-space:nowrap;">2.0 kB</div>
<div style="position:absolute;right:114.00px;top:137.95px;font-family:'Liberation Sans', sans-serif;font-size:6.9px;line-height:10px;color:#3c4043;font-weight:normal;white-space:nowrap;">83 ms</div>
<svg style="position:absolute;left:0;top:0" width="666" height="405"><rect x="564.8" y="139.75" width="0.8000000000000682" height="5.2" fill="#ccc"/></svg>
<svg style="position:absolute;left:0;top:0" width="666" height="405"><rect x="566.8" y="139.75" width="1.8000000000000682" height="5.2" fill="#13b5c9"/></svg>
<div style="position:absolute;left:6.2px;top:151.04999999999998px;width:6.0px;height:6.0px;background:#ffffff;border-radius:1.5px;box-shadow:inset 0 0 0 0.7px #8f9498;box-sizing:border-box"></div>
<div style="position:absolute;left:15.80px;top:149.65px;font-family:'Liberation Sans', sans-serif;font-size:6.9px;line-height:10px;color:#3c4043;font-weight:normal;white-space:nowrap;transform:scaleX(0.9794);transform-origin:left center;">nextMessage.htm?ctoken=fqpp917djxt9</div>
<div style="position:absolute;left:209.30px;top:149.65px;font-family:'Liberation Sans', sans-serif;font-size:6.9px;line-height:10px;color:#3c4043;font-weight:normal;white-space:nowrap;transform:scaleX(0.9304);transform-origin:left center;">200</div>
<div style="position:absolute;left:270.60px;top:149.65px;font-family:'Liberation Sans', sans-serif;font-size:6.9px;line-height:10px;color:#3c4043;font-weight:normal;white-space:nowrap;">fetch</div>
<div style="position:absolute;left:331.50px;top:149.65px;font-family:'Liberation Sans', sans-serif;font-size:6.9px;line-height:10px;color:#3c4043;font-weight:normal;white-space:nowrap;transform:scaleX(0.9305);transform-origin:left center;text-decoration:underline;text-decoration-thickness:0.5px;text-underline-offset:0.6px;text-decoration-color:#8a8a8a;">index.js:1</div>
<div style="position:absolute;right:175.40px;top:149.65px;font-family:'Liberation Sans', sans-serif;font-size:6.9px;line-height:10px;color:#3c4043;font-weight:normal;white-space:nowrap;">1.4 kB</div>
<div style="position:absolute;right:114.00px;top:149.65px;font-family:'Liberation Sans', sans-serif;font-size:6.9px;line-height:10px;color:#3c4043;font-weight:normal;white-space:nowrap;">95 ms</div>
<svg style="position:absolute;left:0;top:0" width="666" height="405"><rect x="566.6" y="151.45" width="1.7999999999999545" height="5.2" fill="#13b5c9"/></svg>
<div style="position:absolute;left:6.2px;top:162.74999999999997px;width:6.0px;height:6.0px;background:#ffffff;border-radius:1.5px;box-shadow:inset 0 0 0 0.7px #8f9498;box-sizing:border-box"></div>
<div style="position:absolute;left:15.80px;top:161.35px;font-family:'Liberation Sans', sans-serif;font-size:6.9px;line-height:10px;color:#3c4043;font-weight:normal;white-space:nowrap;transform:scaleX(0.9910);transform-origin:left center;">folderList.htm?ctoken=fqpp917djxt9</div>
<div style="position:absolute;left:209.30px;top:161.35px;font-family:'Liberation Sans', sans-serif;font-size:6.9px;line-height:10px;color:#3c4043;font-weight:normal;white-space:nowrap;transform:scaleX(0.9304);transform-origin:left center;">200</div>
<div style="position:absolute;left:270.60px;top:161.35px;font-family:'Liberation Sans', sans-serif;font-size:6.9px;line-height:10px;color:#3c4043;font-weight:normal;white-space:nowrap;">fetch</div>
<div style="position:absolute;left:331.50px;top:161.35px;font-family:'Liberation Sans', sans-serif;font-size:6.9px;line-height:10px;color:#3c4043;font-weight:normal;white-space:nowrap;transform:scaleX(0.9305);transform-origin:left center;text-decoration:underline;text-decoration-thickness:0.5px;text-underline-offset:0.6px;text-decoration-color:#8a8a8a;">index.js:1</div>
<div style="position:absolute;right:175.40px;top:161.35px;font-family:'Liberation Sans', sans-serif;font-size:6.9px;line-height:10px;color:#3c4043;font-weight:normal;white-space:nowrap;">1.5 kB</div>
<div style="position:absolute;right:114.00px;top:161.35px;font-family:'Liberation Sans', sans-serif;font-size:6.9px;line-height:10px;color:#3c4043;font-weight:normal;white-space:nowrap;">82 ms</div>
<svg style="position:absolute;left:0;top:0" width="666" height="405"><rect x="566.4" y="163.14999999999998" width="1.8000000000000682" height="5.2" fill="#13b5c9"/></svg>
<div style="position:absolute;left:6.2px;top:174.45px;width:6.0px;height:6.0px;background:#ffffff;border-radius:1.5px;box-shadow:inset 0 0 0 0.7px #8f9498;box-sizing:border-box"></div>
<div style="position:absolute;left:15.80px;top:173.05px;font-family:'Liberation Sans', sans-serif;font-size:6.9px;line-height:10px;color:#3c4043;font-weight:normal;white-space:nowrap;transform:scaleX(0.9630);transform-origin:left center;">?param=5399817403334,icbu_silkroad,YpV3XyRHRczPm%2....</div>
<div style="position:absolute;left:209.30px;top:173.05px;font-family:'Liberation Sans', sans-serif;font-size:6.9px;line-height:10px;color:#3c4043;font-weight:normal;white-space:nowrap;transform:scaleX(0.9304);transform-origin:left center;">200</div>
<div style="position:absolute;left:270.60px;top:173.05px;font-family:'Liberation Sans', sans-serif;font-size:6.9px;line-height:10px;color:#3c4043;font-weight:normal;white-space:nowrap;">xhr</div>
<div style="position:absolute;left:331.50px;top:173.05px;font-family:'Liberation Sans', sans-serif;font-size:6.9px;line-height:10px;color:#3c4043;font-weight:normal;white-space:nowrap;transform:scaleX(0.9305);transform-origin:left center;text-decoration:underline;text-decoration-thickness:0.5px;text-underline-offset:0.6px;text-decoration-color:#8a8a8a;">index.js:1</div>
<div style="position:absolute;right:175.40px;top:173.05px;font-family:'Liberation Sans', sans-serif;font-size:6.9px;line-height:10px;color:#3c4043;font-weight:normal;white-space:nowrap;">390 B</div>
<div style="position:absolute;right:114.00px;top:173.05px;font-family:'Liberation Sans', sans-serif;font-size:6.9px;line-height:10px;color:#3c4043;font-weight:normal;white-space:nowrap;">140 ms</div>
<svg style="position:absolute;left:0;top:0" width="666" height="405"><rect x="566.4" y="174.85" width="0.8000000000000682" height="5.2" fill="#ccc"/></svg>
<svg style="position:absolute;left:0;top:0" width="666" height="405"><rect x="569.8" y="174.85" width="1.900000000000091" height="5.2" fill="#13b5c9"/></svg>
<div style="position:absolute;left:6.2px;top:186.14999999999998px;width:6.0px;height:6.0px;background:#ffffff;border-radius:1.5px;box-shadow:inset 0 0 0 0.7px #8f9498;box-sizing:border-box"></div>
<div style="position:absolute;left:15.80px;top:184.75px;font-family:'Liberation Sans', sans-serif;font-size:6.9px;line-height:10px;color:#3c4043;font-weight:normal;white-space:nowrap;transform:scaleX(0.9824);transform-origin:left center;">orderStatus.htm?ctoken=fqpp917djxt9</div>
<div style="position:absolute;left:209.30px;top:184.75px;font-family:'Liberation Sans', sans-serif;font-size:6.9px;line-height:10px;color:#3c4043;font-weight:normal;white-space:nowrap;transform:scaleX(0.9304);transform-origin:left center;">200</div>
<div style="position:absolute;left:270.60px;top:184.75px;font-family:'Liberation Sans', sans-serif;font-size:6.9px;line-height:10px;color:#3c4043;font-weight:normal;white-space:nowrap;">fetch</div>
<div style="position:absolute;left:331.50px;top:184.75px;font-family:'Liberation Sans', sans-serif;font-size:6.9px;line-height:10px;color:#3c4043;font-weight:normal;white-space:nowrap;transform:scaleX(0.9305);transform-origin:left center;text-decoration:underline;text-decoration-thickness:0.5px;text-underline-offset:0.6px;text-decoration-color:#8a8a8a;">index.js:1</div>
<div style="position:absolute;right:175.40px;top:184.75px;font-family:'Liberation Sans', sans-serif;font-size:6.9px;line-height:10px;color:#3c4043;font-weight:normal;white-space:nowrap;">1.2 kB</div>
<div style="position:absolute;right:114.00px;top:184.75px;font-family:'Liberation Sans', sans-serif;font-size:6.9px;line-height:10px;color:#3c4043;font-weight:normal;white-space:nowrap;">88 ms</div>
<svg style="position:absolute;left:0;top:0" width="666" height="405"><rect x="572.7" y="186.54999999999998" width="2.0" height="5.2" fill="#13b5c9"/></svg>
<div style="position:absolute;left:6.2px;top:197.85px;width:6.0px;height:6.0px;background:#ffffff;border-radius:1.5px;box-shadow:inset 0 0 0 0.7px #8f9498;box-sizing:border-box"></div>
<div style="position:absolute;left:15.80px;top:196.45px;font-family:'Liberation Sans', sans-serif;font-size:6.9px;line-height:10px;color:#3c4043;font-weight:normal;white-space:nowrap;transform:scaleX(0.9626);transform-origin:left center;">getOpMessages.htm</div>
<div style="position:absolute;left:209.30px;top:196.45px;font-family:'Liberation Sans', sans-serif;font-size:6.9px;line-height:10px;color:#3c4043;font-weight:normal;white-space:nowrap;transform:scaleX(0.9304);transform-origin:left center;">200</div>
<div style="position:absolute;left:270.60px;top:196.45px;font-family:'Liberation Sans', sans-serif;font-size:6.9px;line-height:10px;color:#3c4043;font-weight:normal;white-space:nowrap;">fetch</div>
<div style="position:absolute;left:331.50px;top:196.45px;font-family:'Liberation Sans', sans-serif;font-size:6.9px;line-height:10px;color:#3c4043;font-weight:normal;white-space:nowrap;transform:scaleX(0.9305);transform-origin:left center;text-decoration:underline;text-decoration-thickness:0.5px;text-underline-offset:0.6px;text-decoration-color:#8a8a8a;">index.js:1</div>
<div style="position:absolute;right:175.40px;top:196.45px;font-family:'Liberation Sans', sans-serif;font-size:6.9px;line-height:10px;color:#3c4043;font-weight:normal;white-space:nowrap;">3.0 kB</div>
<div style="position:absolute;right:114.00px;top:196.45px;font-family:'Liberation Sans', sans-serif;font-size:6.9px;line-height:10px;color:#3c4043;font-weight:normal;white-space:nowrap;">116 ms</div>
<svg style="position:absolute;left:0;top:0" width="666" height="405"><rect x="573.3" y="198.25" width="2.400000000000091" height="5.2" fill="#13b5c9"/></svg>
<div style="position:absolute;left:6.2px;top:209.54999999999998px;width:6.0px;height:6.0px;background:#ffffff;border-radius:1.5px;box-shadow:inset 0 0 0 0.7px #8f9498;box-sizing:border-box"></div>
<div style="position:absolute;left:15.80px;top:208.15px;font-family:'Liberation Sans', sans-serif;font-size:6.9px;line-height:10px;color:#3c4043;font-weight:normal;white-space:nowrap;transform:scaleX(0.9789);transform-origin:left center;">getToken.htm</div>
<div style="position:absolute;left:209.30px;top:208.15px;font-family:'Liberation Sans', sans-serif;font-size:6.9px;line-height:10px;color:#3c4043;font-weight:normal;white-space:nowrap;transform:scaleX(0.9304);transform-origin:left center;">200</div>
<div style="position:absolute;left:270.60px;top:208.15px;font-family:'Liberation Sans', sans-serif;font-size:6.9px;line-height:10px;color:#3c4043;font-weight:normal;white-space:nowrap;">fetch</div>
<div style="position:absolute;left:331.50px;top:208.15px;font-family:'Liberation Sans', sans-serif;font-size:6.9px;line-height:10px;color:#3c4043;font-weight:normal;white-space:nowrap;transform:scaleX(0.9305);transform-origin:left center;text-decoration:underline;text-decoration-thickness:0.5px;text-underline-offset:0.6px;text-decoration-color:#8a8a8a;">index.js:1</div>
<div style="position:absolute;right:175.40px;top:208.15px;font-family:'Liberation Sans', sans-serif;font-size:6.9px;line-height:10px;color:#3c4043;font-weight:normal;white-space:nowrap;">1.1 kB</div>
<div style="position:absolute;right:114.00px;top:208.15px;font-family:'Liberation Sans', sans-serif;font-size:6.9px;line-height:10px;color:#3c4043;font-weight:normal;white-space:nowrap;">41 ms</div>
<svg style="position:absolute;left:0;top:0" width="666" height="405"><rect x="573.5" y="209.95" width="2.2000000000000455" height="5.2" fill="#13b5c9"/></svg>
<div style="position:absolute;left:6.2px;top:221.24999999999997px;width:6.0px;height:6.0px;background:#ffffff;border-radius:1.5px;box-shadow:inset 0 0 0 0.7px #8f9498;box-sizing:border-box"></div>
<div style="position:absolute;left:15.80px;top:219.85px;font-family:'Liberation Sans', sans-serif;font-size:6.9px;line-height:10px;color:#3c4043;font-weight:normal;white-space:nowrap;transform:scaleX(0.9789);transform-origin:left center;">getToken.htm</div>
<div style="position:absolute;left:209.30px;top:219.85px;font-family:'Liberation Sans', sans-serif;font-size:6.9px;line-height:10px;color:#3c4043;font-weight:normal;white-space:nowrap;transform:scaleX(0.9304);transform-origin:left center;">200</div>
<div style="position:absolute;left:270.60px;top:219.85px;font-family:'Liberation Sans', sans-serif;font-size:6.9px;line-height:10px;color:#3c4043;font-weight:normal;white-space:nowrap;">fetch</div>
<div style="position:absolute;left:331.50px;top:219.85px;font-family:'Liberation Sans', sans-serif;font-size:6.9px;line-height:10px;color:#3c4043;font-weight:normal;white-space:nowrap;transform:scaleX(0.9305);transform-origin:left center;text-decoration:underline;text-decoration-thickness:0.5px;text-underline-offset:0.6px;text-decoration-color:#8a8a8a;">index.js:1</div>
<div style="position:absolute;right:175.40px;top:219.85px;font-family:'Liberation Sans', sans-serif;font-size:6.9px;line-height:10px;color:#3c4043;font-weight:normal;white-space:nowrap;">996 B</div>
<div style="position:absolute;right:114.00px;top:219.85px;font-family:'Liberation Sans', sans-serif;font-size:6.9px;line-height:10px;color:#3c4043;font-weight:normal;white-space:nowrap;">51 ms</div>
<svg style="position:absolute;left:0;top:0" width="666" height="405"><rect x="573.7" y="221.64999999999998" width="1.7999999999999545" height="5.2" fill="#13b5c9"/></svg>
<div style="position:absolute;left:6.2px;top:232.95px;width:6.0px;height:6.0px;background:#ffffff;border-radius:1.5px;box-shadow:inset 0 0 0 0.7px #8f9498;box-sizing:border-box"></div>
<div style="position:absolute;left:15.80px;top:231.55px;font-family:'Liberation Sans', sans-serif;font-size:6.9px;line-height:10px;color:#3c4043;font-weight:normal;white-space:nowrap;transform:scaleX(0.9769);transform-origin:left center;">inquiryFloatSummary.htm</div>
<div style="position:absolute;left:209.30px;top:231.55px;font-family:'Liberation Sans', sans-serif;font-size:6.9px;line-height:10px;color:#3c4043;font-weight:normal;white-space:nowrap;transform:scaleX(0.9304);transform-origin:left center;">200</div>
<div style="position:absolute;left:270.60px;top:231.55px;font-family:'Liberation Sans', sans-serif;font-size:6.9px;line-height:10px;color:#3c4043;font-weight:normal;white-space:nowrap;">fetch</div>
<div style="position:absolute;left:331.50px;top:231.55px;font-family:'Liberation Sans', sans-serif;font-size:6.9px;line-height:10px;color:#3c4043;font-weight:normal;white-space:nowrap;transform:scaleX(0.9305);transform-origin:left center;text-decoration:underline;text-decoration-thickness:0.5px;text-underline-offset:0.6px;text-decoration-color:#8a8a8a;">index.js:1</div>
<div style="position:absolute;right:175.40px;top:231.55px;font-family:'Liberation Sans', sans-serif;font-size:6.9px;line-height:10px;color:#3c4043;font-weight:normal;white-space:nowrap;">1.6 kB</div>
<div style="position:absolute;right:114.00px;top:231.55px;font-family:'Liberation Sans', sans-serif;font-size:6.9px;line-height:10px;color:#3c4043;font-weight:normal;white-space:nowrap;">104 ms</div>
<svg style="position:absolute;left:0;top:0" width="666" height="405"><rect x="573.5" y="233.35" width="1.1000000000000227" height="5.2" fill="#34a853"/></svg>
<svg style="position:absolute;left:0;top:0" width="666" height="405"><rect x="574.6" y="233.35" width="1.8999999999999773" height="5.2" fill="#13b5c9"/></svg>
<div style="position:absolute;left:6.2px;top:244.64999999999998px;width:6.0px;height:6.0px;background:#ffffff;border-radius:1.5px;box-shadow:inset 0 0 0 0.7px #8f9498;box-sizing:border-box"></div>
<div style="position:absolute;left:15.80px;top:243.25px;font-family:'Liberation Sans', sans-serif;font-size:6.9px;line-height:10px;color:#3c4043;font-weight:normal;white-space:nowrap;transform:scaleX(0.9776);transform-origin:left center;">um.json</div>
<div style="position:absolute;left:209.30px;top:243.25px;font-family:'Liberation Sans', sans-serif;font-size:6.9px;line-height:10px;color:#3c4043;font-weight:normal;white-space:nowrap;transform:scaleX(0.9304);transform-origin:left center;">200</div>
<div style="position:absolute;left:270.60px;top:243.25px;font-family:'Liberation Sans', sans-serif;font-size:6.9px;line-height:10px;color:#3c4043;font-weight:normal;white-space:nowrap;">xhr</div>
<div style="position:absolute;left:331.50px;top:243.25px;font-family:'Liberation Sans', sans-serif;font-size:6.9px;line-height:10px;color:#3c4043;font-weight:normal;white-space:nowrap;transform:scaleX(0.9305);transform-origin:left center;text-decoration:underline;text-decoration-thickness:0.5px;text-underline-offset:0.6px;text-decoration-color:#8a8a8a;">index.js:1</div>
<div style="position:absolute;right:175.40px;top:243.25px;font-family:'Liberation Sans', sans-serif;font-size:6.9px;line-height:10px;color:#3c4043;font-weight:normal;white-space:nowrap;">730 B</div>
<div style="position:absolute;right:114.00px;top:243.25px;font-family:'Liberation Sans', sans-serif;font-size:6.9px;line-height:10px;color:#3c4043;font-weight:normal;white-space:nowrap;">127 ms</div>
<svg style="position:absolute;left:0;top:0" width="666" height="405"><rect x="578" y="245.04999999999998" width="2" height="5.2" fill="#e9a5b5"/></svg>
<svg style="position:absolute;left:0;top:0" width="666" height="405"><rect x="580.6" y="245.04999999999998" width="2.0" height="5.2" fill="#4a9af4"/></svg>
<div style="position:absolute;left:6.2px;top:256.34999999999997px;width:6.0px;height:6.0px;background:#ffffff;border-radius:1.5px;box-shadow:inset 0 0 0 0.7px #8f9498;box-sizing:border-box"></div>
<div style="position:absolute;left:15.80px;top:254.95px;font-family:'Liberation Sans', sans-serif;font-size:6.9px;line-height:10px;color:#3c4043;font-weight:normal;white-space:nowrap;transform:scaleX(0.9620);transform-origin:left center;">batchTranslate.htm</div>
<div style="position:absolute;left:209.30px;top:254.95px;font-family:'Liberation Sans', sans-serif;font-size:6.9px;line-height:10px;color:#3c4043;font-weight:normal;white-space:nowrap;transform:scaleX(0.9304);transform-origin:left center;">200</div>
<div style="position:absolute;left:270.60px;top:254.95px;font-family:'Liberation Sans', sans-serif;font-size:6.9px;line-height:10px;color:#3c4043;font-weight:normal;white-space:nowrap;">fetch</div>
<div style="position:absolute;left:331.50px;top:254.95px;font-family:'Liberation Sans', sans-serif;font-size:6.9px;line-height:10px;color:#3c4043;font-weight:normal;white-space:nowrap;transform:scaleX(0.9305);transform-origin:left center;text-decoration:underline;text-decoration-thickness:0.5px;text-underline-offset:0.6px;text-decoration-color:#8a8a8a;">index.js:1</div>
<div style="position:absolute;right:175.40px;top:254.95px;font-family:'Liberation Sans', sans-serif;font-size:6.9px;line-height:10px;color:#3c4043;font-weight:normal;white-space:nowrap;">933 B</div>
<div style="position:absolute;right:114.00px;top:254.95px;font-family:'Liberation Sans', sans-serif;font-size:6.9px;line-height:10px;color:#3c4043;font-weight:normal;white-space:nowrap;">94 ms</div>
<svg style="position:absolute;left:0;top:0" width="666" height="405"><rect x="582.6" y="256.74999999999994" width="0.6999999999999318" height="5.2" fill="#ccc"/></svg>
<svg style="position:absolute;left:0;top:0" width="666" height="405"><rect x="583.6" y="256.74999999999994" width="2.0" height="5.2" fill="#13b5c9"/></svg>
<div style="position:absolute;left:6.2px;top:268.05px;width:6.0px;height:6.0px;background:#ffffff;border-radius:1.5px;box-shadow:inset 0 0 0 0.7px #8f9498;box-sizing:border-box"></div>
<div style="position:absolute;left:15.80px;top:266.65px;font-family:'Liberation Sans', sans-serif;font-size:6.9px;line-height:10px;color:#3c4043;font-weight:normal;white-space:nowrap;transform:scaleX(0.9620);transform-origin:left center;">batchTranslate.htm</div>
<div style="position:absolute;left:209.30px;top:266.65px;font-family:'Liberation Sans', sans-serif;font-size:6.9px;line-height:10px;color:#3c4043;font-weight:normal;white-space:nowrap;transform:scaleX(0.9304);transform-origin:left center;">200</div>
<div style="position:absolute;left:270.60px;top:266.65px;font-family:'Liberation Sans', sans-serif;font-size:6.9px;line-height:10px;color:#3c4043;font-weight:normal;white-space:nowrap;">fetch</div>
<div style="position:absolute;left:331.50px;top:266.65px;font-family:'Liberation Sans', sans-serif;font-size:6.9px;line-height:10px;color:#3c4043;font-weight:normal;white-space:nowrap;transform:scaleX(0.9305);transform-origin:left center;text-decoration:underline;text-decoration-thickness:0.5px;text-underline-offset:0.6px;text-decoration-color:#8a8a8a;">index.js:1</div>
<div style="position:absolute;right:175.40px;top:266.65px;font-family:'Liberation Sans', sans-serif;font-size:6.9px;line-height:10px;color:#3c4043;font-weight:normal;white-space:nowrap;">965 B</div>
<div style="position:absolute;right:114.00px;top:266.65px;font-family:'Liberation Sans', sans-serif;font-size:6.9px;line-height:10px;color:#3c4043;font-weight:normal;white-space:nowrap;">59 ms</div>
<svg style="position:absolute;left:0;top:0" width="666" height="405"><rect x="593.5" y="268.45" width="1.5" height="5.2" fill="#4ab0f4"/></svg>
<svg style="position:absolute;left:0;top:0" width="666" height="405"><rect x="657.3" y="121.9" width="8.7" height="153.4" fill="#f1f1f1"/></svg>
<svg style="position:absolute;left:0;top:0" width="666" height="405"><rect x="658.2" y="139" width="7" height="117" fill="#c1c1c1"/></svg>
<svg style="position:absolute;left:657px;top:122px" width="9" height="154"><path d="M2 7 H7 L4.5 4 Z" fill="#505050"/><path d="M2 146 H7 L4.5 149 Z" fill="#505050"/></svg>
<div style="position:absolute;left:3.3px;top:136.4px;width:148px;height:12.2px;border:1.5px solid #ff1a1a;border-radius:2px;box-sizing:border-box"></div>
<svg style="position:absolute;left:0;top:0" width="666" height="405"><rect x="3" y="275.3" width="663" height="15.8" fill="#f1f3f4"/></svg>
<svg style="position:absolute;left:0;top:0" width="666" height="405"><rect x="3" y="291.1" width="663" height="1.0" fill="#cacdd1"/></svg>
<div style="position:absolute;left:8.10px;top:279.10px;font-family:'Liberation Sans', sans-serif;font-size:6.9px;line-height:10px;color:#5f6368;font-weight:normal;white-space:nowrap;transform:scaleX(0.9559);transform-origin:left center;">15 / 148 requests</div>
<svg style="position:absolute;left:0;top:0" width="666" height="405"><rect x="64.3" y="278.5" width="0.6" height="9.5" fill="#c4c7cc"/></svg>
<div style="position:absolute;left:70.00px;top:279.10px;font-family:'Liberation Sans', sans-serif;font-size:6.9px;line-height:10px;color:#5f6368;font-weight:normal;white-space:nowrap;transform:scaleX(0.9511);transform-origin:left center;">19.6 kB / 103 kB transferred</div>
<svg style="position:absolute;left:0;top:0" width="666" height="405"><rect x="156.8" y="278.5" width="0.6" height="9.5" fill="#c4c7cc"/></svg>
<div style="position:absolute;left:162.50px;top:279.10px;font-family:'Liberation Sans', sans-serif;font-size:6.9px;line-height:10px;color:#5f6368;font-weight:normal;white-space:nowrap;transform:scaleX(0.9371);transform-origin:left center;">11.5 kB / 10.7 MB resources</div>
<svg style="position:absolute;left:0;top:0" width="666" height="405"><rect x="248.8" y="278.5" width="0.6" height="9.5" fill="#c4c7cc"/></svg>
<div style="position:absolute;left:254.60px;top:279.10px;font-family:'Liberation Sans', sans-serif;font-size:6.9px;line-height:10px;color:#5f6368;font-weight:normal;white-space:nowrap;transform:scaleX(0.9191);transform-origin:left center;">Finish: 15.33 s</div>
<svg style="position:absolute;left:0;top:0" width="666" height="405"><rect x="300.4" y="278.5" width="0.6" height="9.5" fill="#c4c7cc"/></svg>
<div style="position:absolute;left:306.00px;top:279.10px;font-family:'Liberation Sans', sans-serif;font-size:6.9px;line-height:10px;color:#1a73e8;font-weight:normal;white-space:nowrap;transform:scaleX(0.9556);transform-origin:left center;">DOMContentLoaded: 1.77 s</div>
<svg style="position:absolute;left:0;top:0" width="666" height="405"><rect x="393.5" y="278.5" width="0.6" height="9.5" fill="#c4c7cc"/></svg>
<div style="position:absolute;left:398.70px;top:279.10px;font-family:'Liberation Sans', sans-serif;font-size:6.9px;line-height:10px;color:#d93025;font-weight:normal;white-space:nowrap;transform:scaleX(0.9041);transform-origin:left center;">Load: 8.91 s</div>
<svg style="position:absolute;left:0;top:0" width="666" height="405"><rect x="3" y="292.1" width="663" height="14.9" fill="#f1f3f4"/></svg>
<svg style="position:absolute;left:0;top:0" width="666" height="405"><rect x="3" y="306.6" width="663" height="1" fill="#dadde1"/></svg>
<svg style="position:absolute;left:8px;top:293px" width="6" height="12"><circle cx="2.8" cy="2.6" r="0.7" fill="#5f6368"/><circle cx="2.8" cy="5.9" r="0.7" fill="#5f6368"/><circle cx="2.8" cy="9.2" r="0.7" fill="#5f6368"/></svg>
<div style="position:absolute;left:22.50px;top:295.40px;font-family:'Liberation Sans', sans-serif;font-size:6.9px;line-height:10px;color:#202124;font-weight:normal;white-space:nowrap;transform:scaleX(0.9290);transform-origin:left center;">Console</div>
<div style="position:absolute;left:57.30px;top:295.40px;font-family:'Liberation Sans', sans-serif;font-size:6.9px;line-height:10px;color:#5f6368;font-weight:normal;white-space:nowrap;transform:scaleX(0.9714);transform-origin:left center;">What&#x27;s New</div>
<svg style="position:absolute;left:0;top:0" width="666" height="405"><rect x="17.3" y="305.6" width="34.6" height="1.1" fill="#4f8ef0"/></svg>
<svg style="position:absolute;left:654px;top:293.5px" width="10" height="10"><path d="M2 2 L8 8 M8 2 L2 8" stroke="#5f6368" stroke-width="0.9"/></svg>
<svg style="position:absolute;left:0;top:0" width="666" height="405"><rect x="3" y="307.3" width="663" height="14" fill="#f1f3f4"/></svg>
<svg style="position:absolute;left:0;top:0" width="666" height="405"><rect x="3" y="320.9" width="663" height="1" fill="#dadde1"/></svg>
<svg style="position:absolute;left:0;top:0" width="666" height="330"><rect x="6.6" y="310.6" width="7.8" height="7.2" fill="none" stroke="#5f6368" stroke-width="0.9"/><rect x="8.6" y="311" width="0.8" height="6.6" fill="#5f6368"/><path d="M10.6 312.6 L13 314.2 L10.6 315.8 Z" fill="#5f6368"/><circle cx="26.5" cy="314.3" r="3.1" fill="none" stroke="#5f6368" stroke-width="1.2"/><path d="M24.3 312.1 L28.7 316.5" stroke="#5f6368" stroke-width="1.2"/><path d="M55.6 312.6 H59.4 L57.5 315.6 Z" fill="#5f6368"/><path d="M70.6 314.3 Q74.8 309.6 79 314.3 Q74.8 319 70.6 314.3 Z" fill="none" stroke="#5f6368" stroke-width="1.3"/><circle cx="74.8" cy="314.3" r="1.5" fill="#5f6368"/><path d="M533 312.8 H537 L535 315.6 Z" fill="#5f6368"/></svg>
<svg style="position:absolute;left:0;top:0" width="666" height="405"><rect x="36.7" y="310" width="0.6" height="8.5" fill="#c4c7cc"/></svg>
<div style="position:absolute;left:41.80px;top:310.30px;font-family:'Liberation Sans', sans-serif;font-size:6.9px;line-height:10px;color:#5f6368;font-weight:normal;white-space:nowrap;transform:scaleX(1.0945);transform-origin:left center;">top</div>
<svg style="position:absolute;left:0;top:0" width="666" height="405"><rect x="64.3" y="310" width="0.6" height="8.5" fill="#c4c7cc"/></svg>
<svg style="position:absolute;left:0;top:0" width="666" height="405"><rect x="84.5" y="310" width="0.6" height="8.5" fill="#c4c7cc"/></svg>
<svg style="position:absolute;left:0;top:0" width="666" height="405"><rect x="89.5" y="308.6" width="396" height="11.6" fill="#ffffff"/></svg>
<div style="position:absolute;left:92.00px;top:310.30px;font-family:'Liberation Sans', sans-serif;font-size:6.9px;line-height:10px;color:#80868b;font-weight:normal;white-space:nowrap;transform:scaleX(0.9469);transform-origin:left center;">Filter</div>
<div style="position:absolute;left:490.60px;top:310.30px;font-family:'Liberation Sans', sans-serif;font-size:6.9px;line-height:10px;color:#3c4043;font-weight:normal;white-space:nowrap;transform:scaleX(0.9595);transform-origin:left center;">Default levels</div>
<svg style="position:absolute;left:0;top:0" width="666" height="405"><rect x="541.8" y="310" width="0.6" height="8.5" fill="#c4c7cc"/></svg>
<div style="position:absolute;left:545.6px;top:308.8px;width:64.4px;height:10.8px;background:#f1f3f4;border-radius:2px;box-shadow:inset 0 0 0 0.6px #dadce0"></div>
<svg style="position:absolute;left:0;top:300px" width="666" height="30"><path d="M580 11.5 H585 V15.4 H581.8 L580 16.9 Z" fill="#d93025"/><rect x="582.2" y="12.3" width="0.6" height="1.7" fill="#fff"/><rect x="582.2" y="14.4" width="0.6" height="0.6" fill="#fff"/><path d="M595 11.5 H600 V15.4 H596.8 L595 16.9 Z" fill="#1a73e8"/></svg>
<div style="position:absolute;left:550.70px;top:310.30px;font-family:'Liberation Sans', sans-serif;font-size:6.9px;line-height:10px;color:#3c4043;font-weight:normal;white-space:nowrap;transform:scaleX(0.8993);transform-origin:left center;">3 Issues:</div>
<div style="position:absolute;left:587.30px;top:310.30px;font-family:'Liberation Sans', sans-serif;font-size:6.9px;line-height:10px;color:#3c4043;font-weight:normal;white-space:nowrap;transform:scaleX(0.9366);transform-origin:left center;">2</div>
<div style="position:absolute;left:602.00px;top:310.30px;font-family:'Liberation Sans', sans-serif;font-size:6.9px;line-height:10px;color:#3c4043;font-weight:normal;white-space:nowrap;transform:scaleX(0.9366);transform-origin:left center;">1</div>
<svg style="position:absolute;left:0;top:0" width="666" height="405"><rect x="615.8" y="310" width="0.6" height="8.5" fill="#c4c7cc"/></svg>
<div style="position:absolute;left:621.00px;top:310.30px;font-family:'Liberation Sans', sans-serif;font-size:6.9px;line-height:10px;color:#9aa0a6;font-weight:normal;white-space:nowrap;transform:scaleX(0.9829);transform-origin:left center;">9 hidden</div>
<svg style="position:absolute;left:0;top:0" width="666" height="405"><path d="M660.77 313.33 L662.01 313.46 L662.01 315.14 L660.77 315.27 L660.70 315.43 L661.48 316.40 L660.30 317.58 L659.33 316.80 L659.17 316.87 L659.04 318.11 L657.36 318.11 L657.23 316.87 L657.07 316.80 L656.10 317.58 L654.92 316.40 L655.70 315.43 L655.63 315.27 L654.39 315.14 L654.39 313.46 L655.63 313.33 L655.70 313.17 L654.92 312.20 L656.10 311.02 L657.07 311.80 L657.23 311.73 L657.36 310.49 L659.04 310.49 L659.17 311.73 L659.33 311.80 L660.30 311.02 L661.48 312.20 L660.70 313.17 Z" fill="#5f6368"/><circle cx="658.2" cy="314.3" r="1.1" fill="#f1f3f4"/></svg>
<svg style="position:absolute;left:0;top:0" width="666" height="405"><rect x="3" y="321.6" width="654.8" height="83.4" fill="#ffffff"/></svg>
<svg style="position:absolute;left:0;top:0" width="666" height="405"><rect x="3" y="321.6" width="654.8" height="36.9" fill="#fff0f0"/></svg>
<svg style="position:absolute;left:0;top:0" width="666" height="405"><rect x="3" y="330.0" width="654.8" height="0.6" fill="#ffe0e0"/></svg>
<svg style="position:absolute;left:0;top:0" width="666" height="405"><rect x="3" y="358.3" width="654.8" height="0.6" fill="#fff0d0"/></svg>
<svg style="position:absolute;left:0;top:0" width="666" height="405"><rect x="3" y="358.9" width="654.8" height="22.8" fill="#fffbe5"/></svg>
<svg style="position:absolute;left:0;top:0" width="666" height="405"><rect x="3" y="370.2" width="654.8" height="0.6" fill="#fff5c2"/></svg>
<svg style="position:absolute;left:0;top:0" width="666" height="405"><rect x="3" y="381.5" width="654.8" height="0.6" fill="#fff5c2"/></svg>
<svg style="position:absolute;left:0;top:0" width="666" height="405"><rect x="657.8" y="321.6" width="8.2" height="77" fill="#f1f1f1"/></svg>
<svg style="position:absolute;left:0;top:0" width="666" height="405"><rect x="658.6" y="367" width="7" height="27" fill="#c1c1c1"/></svg>
<svg style="position:absolute;left:657.8px;top:322px" width="9" height="10"><path d="M2 7 H7 L4.5 4 Z" fill="#505050"/></svg>
<svg style="position:absolute;left:0;top:320px" width="30" height="70"><circle cx="8.1" cy="5.9" r="2.8" fill="#e8453c"/><path d="M7 4.8 L9.2 7 M9.2 4.8 L7 7" stroke="#fff" stroke-width="0.7"/><circle cx="8.1" cy="17.4" r="2.8" fill="#e8453c"/><path d="M7 16.3 L9.2 18.5 M9.2 16.3 L7 18.5" stroke="#fff" stroke-width="0.7"/><path d="M8.1 41.3 L11.1 47.4 H5.1 Z" fill="#f4b400" stroke="#f4b400" stroke-width="0.5" stroke-linejoin="round"/><rect x="7.75" y="43.4" width="0.7" height="2.2" fill="#fff"/><rect x="7.75" y="46" width="0.7" height="0.7" fill="#fff"/><path d="M8.1 52.5 L11.1 58.6 H5.1 Z" fill="#f4b400" stroke="#f4b400" stroke-width="0.5" stroke-linejoin="round"/><rect x="7.75" y="54.6" width="0.7" height="2.2" fill="#fff"/><rect x="7.75" y="57.2" width="0.7" height="0.7" fill="#fff"/><path d="M15.6 4.4 L18.6 6.2 L15.6 8 Z" fill="#444"/><path d="M15.6 15.8 L18.6 17.6 L15.6 19.4 Z" fill="#444"/><path d="M15.6 43.7 L18.6 45.5 L15.6 47.3 Z" fill="#444"/><path d="M15.6 54.8 L18.6 56.6 L15.6 58.4 Z" fill="#444"/><path d="M7.1 65.2 L9.5 67.4 L7.1 69.6" fill="none" stroke="#4f8ef0" stroke-width="1.1"/></svg>
<div style="position:absolute;left:20.70px;top:322.10px;font-family:'Liberation Mono', monospace;font-size:6.15px;line-height:10px;color:#000;font-weight:normal;white-space:nowrap;"><span style="color:#f23c3c;">GET </span><span style="color:#555555;text-decoration:underline;text-decoration-thickness:0.6px;text-underline-offset:0.3px;">https://localhost.wwbizsrv.alibaba.com:4813/?callback=jsonp_1632817408705_36610</span><span style="color:#f23c3c;"> net::ERR_CONNECTION_REFUSED</span></div>
<div style="position:absolute;left:20.40px;top:332.90px;font-family:'Liberation Mono', monospace;font-size:6.15px;line-height:10px;color:#000;font-weight:normal;white-space:nowrap;"><span style="color:#f23c3c;">Mixed Content: The page at &#x27;</span><span style="color:#555555;text-decoration:underline;text-decoration-thickness:0.6px;text-underline-offset:0.3px;">https://message.alibaba.com/message/maDetail.htm?imInquiryId=20012580655&amp;ha…5/MC1IDX1x10-O9JzICPwoZRI4OmNWcbouMwOlcpJErZoY</span></div>
<div style="position:absolute;left:15.00px;top:341.30px;font-family:'Liberation Mono', monospace;font-size:6.15px;line-height:10px;color:#000;font-weight:normal;white-space:nowrap;"><span style="color:#555555;text-decoration:underline;text-decoration-thickness:0.6px;text-underline-offset:0.3px;">oS8cmn0nGbgsNPDxi-0_woSrlbE/</span><span style="color:#f23c3c;">&#x27; was loaded over HTTPS, but requested an insecure script &#x27;</span><span style="color:#555555;text-decoration:underline;text-decoration-thickness:0.6px;text-underline-offset:0.3px;">http://localhost.wwbizsrv.alibaba.com:4812/?callback=jsonp_1632817410757_10766</span><span style="color:#f23c3c;">&#x27;.</span></div>
<div style="position:absolute;left:15.00px;top:349.20px;font-family:'Liberation Mono', monospace;font-size:6.15px;line-height:10px;color:#000;font-weight:normal;white-space:nowrap;"><span style="color:#f23c3c;">This request has been blocked; the content must be served over HTTPS.</span></div>
<div style="position:absolute;left:20.20px;top:361.20px;font-family:'Liberation Mono', monospace;font-size:6.15px;line-height:10px;color:#000;font-weight:normal;white-space:nowrap;"><span style="color:#63502a;">[Deprecation] The ScriptProcessorNode is deprecated. Use AudioWorkletNode instead. (</span><span style="color:#555555;text-decoration:underline;text-decoration-thickness:0.6px;text-underline-offset:0.3px;">https://bit.ly/audio-worklet</span><span style="color:#63502a;">)</span></div>
<div style="position:absolute;left:20.20px;top:372.40px;font-family:'Liberation Mono', monospace;font-size:6.15px;line-height:10px;color:#000;font-weight:normal;white-space:nowrap;"><span style="color:#63502a;">[Deprecation] The ScriptProcessorNode is deprecated. Use AudioWorkletNode instead. (</span><span style="color:#555555;text-decoration:underline;text-decoration-thickness:0.6px;text-underline-offset:0.3px;">https://bit.ly/audio-worklet</span><span style="color:#63502a;">)</span></div>
<div style="position:absolute;right:24.40px;top:322.20px;font-family:'Liberation Mono', monospace;font-size:6.15px;line-height:10px;color:#555555;font-weight:normal;white-space:nowrap;"><span style="color:#555555;text-decoration:underline;text-decoration-thickness:0.6px;text-underline-offset:0.3px">fetch-jsonp.js:82</span></div>
<div style="position:absolute;right:24.40px;top:332.90px;font-family:'Liberation Mono', monospace;font-size:6.15px;line-height:10px;color:#555555;font-weight:normal;white-space:nowrap;"><span style="color:#555555;text-decoration:underline;text-decoration-thickness:0.6px;text-underline-offset:0.3px">fetch-jsonp.js:82</span></div>
<div style="position:absolute;right:24.40px;top:361.20px;font-family:'Liberation Mono', monospace;font-size:6.15px;line-height:10px;color:#555555;font-weight:normal;white-space:nowrap;"><span style="color:#555555;text-decoration:underline;text-decoration-thickness:0.6px;text-underline-offset:0.3px">collina.js:9</span></div>
<div style="position:absolute;right:24.40px;top:372.40px;font-family:'Liberation Mono', monospace;font-size:6.15px;line-height:10px;color:#555555;font-weight:normal;white-space:nowrap;"><span style="color:#555555;text-decoration:underline;text-decoration-thickness:0.6px;text-underline-offset:0.3px">fireyejs.js:2</span></div>
<div style="position:absolute;left:151.1px;top:14.1px;width:42.3px;height:18.8px;border:1.9px solid #ff1a1a;border-radius:3px;box-sizing:border-box"></div>
<div style="position:absolute;left:206.6px;top:44.8px;width:39.4px;height:16.7px;border:1.9px solid #ff1a1a;border-radius:3px;box-sizing:border-box"></div>
<svg style="position:absolute;left:0;top:0" width="666" height="405"><polygon points="174.46,34.83 193.62,51.18 192.01,53.22 202.40,56.20 197.09,46.78 195.48,48.82 175.14,33.97" fill="#ff1a1a"/><polygon points="192.31,63.79 61.14,122.24 60.08,119.92 51.50,128.80 63.83,128.10 62.77,125.78 192.69,64.61" fill="#ff1a1a"/></svg>
<svg style="position:absolute;left:0;top:0" width="666" height="405"><circle cx="3" cy="2.3" r="5.3" fill="none" stroke="#555" stroke-width="1.0"/><circle cx="335.3" cy="1.5" r="5.3" fill="none" stroke="#555" stroke-width="1.0"/><circle cx="667" cy="2" r="5.3" fill="none" stroke="#555" stroke-width="1.0"/><circle cx="3" cy="201.3" r="5.3" fill="#fff" stroke="#555" stroke-width="1.0"/><circle cx="667" cy="201.3" r="5.3" fill="#fff" stroke="#555" stroke-width="1.0"/><circle cx="3" cy="400.3" r="5.3" fill="#fff" stroke="#555" stroke-width="1.0"/><circle cx="335.6" cy="400.3" r="5.3" fill="#fff" stroke="#555" stroke-width="1.0"/><circle cx="667" cy="400.5" r="5.3" fill="#fff" stroke="#555" stroke-width="1.0"/></svg>
<svg style="position:absolute;left:0;top:0" width="20" height="16"><circle cx="10" cy="8.1" r="4.0" fill="#1a73e8"/><rect x="9.55" y="7.3" width="0.9" height="2.8" fill="#fff"/><rect x="9.55" y="5.8" width="0.9" height="0.9" fill="#fff"/></svg>
</body></html>
